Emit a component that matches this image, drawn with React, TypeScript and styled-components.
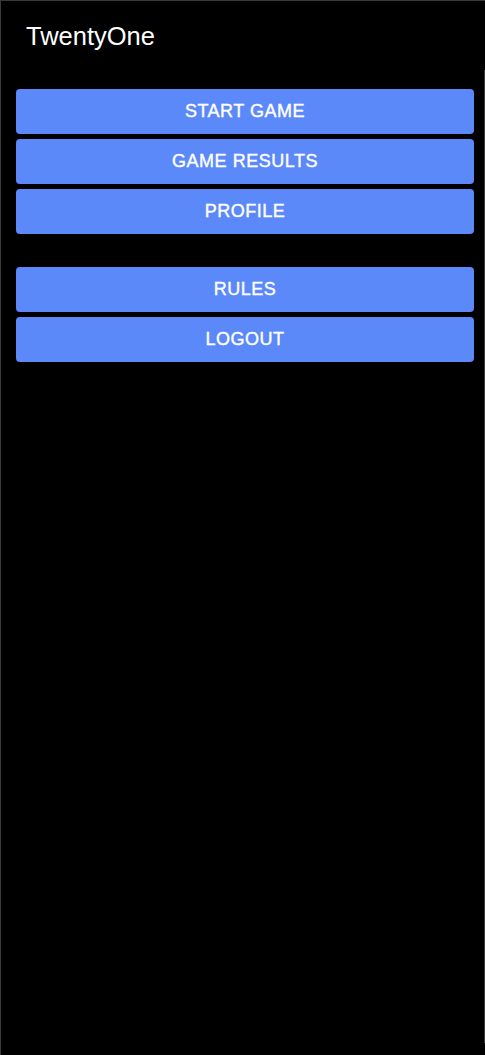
import React from 'react';
import styled, { createGlobalStyle } from 'styled-components';

const GlobalStyle = createGlobalStyle`
  html, body {
    margin: 0;
    padding: 0;
    background: #000;
  }
  * {
    box-sizing: border-box;
  }
`;

const Drawer = styled.div`
  height: 1055px;
  display: flex;
  flex-direction: column;
  background: #000;
  border-top: 1px solid #3a3a3a;
  border-left: 1px solid #3a3a3a;
  font-family: "Liberation Sans", Arial, sans-serif;
`;

const Header = styled.div`
  height: 69px;
  padding: 21px 0 0 25px;
`;

const Title = styled.div`
  color: #fff;
  font-size: 25.5px;
  line-height: 29px;
`;

const Menu = styled.nav`
  flex: 1;
  margin-bottom: 12px;
  border-right: 1px solid #3a3a3a;
  padding: 19px 10px 0 15px;
  display: flex;
  flex-direction: column;
  gap: 33px;
`;

const Group = styled.div`
  display: flex;
  flex-direction: column;
  gap: 5px;
`;

const MenuButton = styled.button`
  height: 45px;
  width: 100%;
  border: none;
  border-radius: 4px;
  background: #5c89f9;
  color: #fff;
  font-family: "Liberation Sans", Arial, sans-serif;
  font-size: 18px;
  font-weight: 500;
  letter-spacing: 0.02857em;
  text-transform: uppercase;
  -webkit-text-stroke: 0.4px #fff;
  cursor: pointer;
  display: flex;
  align-items: center;
  justify-content: center;
  padding: 0;
`;

const groups = [
  ['Start Game', 'Game Results', 'Profile'],
  ['Rules', 'Logout'],
];

export default function App() {
  return (
    <>
      <GlobalStyle />
      <Drawer>
        <Header>
          <Title>TwentyOne</Title>
        </Header>
        <Menu>
          {groups.map((items, i) => (
            <Group key={i}>
              {items.map((label) => (
                <MenuButton key={label}>{label}</MenuButton>
              ))}
            </Group>
          ))}
        </Menu>
      </Drawer>
    </>
  );
}
